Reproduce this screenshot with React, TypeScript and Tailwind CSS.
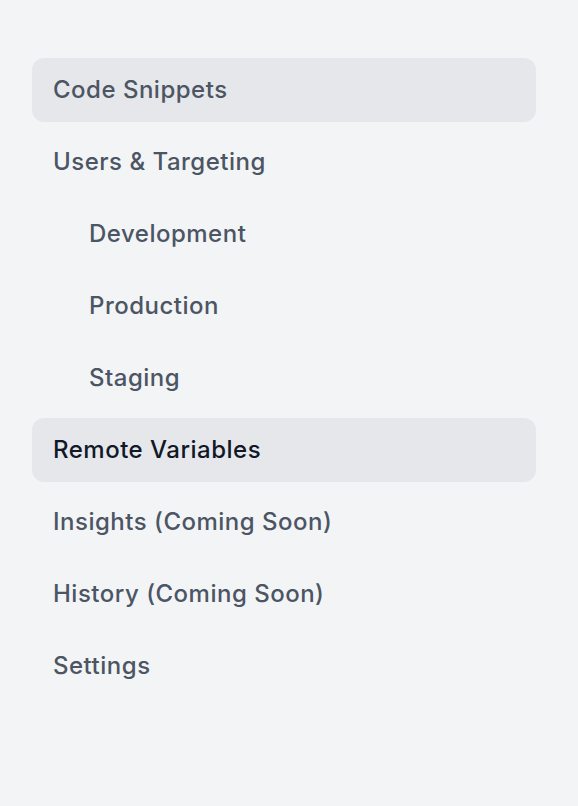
import React from 'react';

type NavItem = {
  label: string;
  sub?: boolean;
  active?: boolean;
  current?: boolean;
};

const items: NavItem[] = [
  { label: 'Code Snippets', active: true },
  { label: 'Users & Targeting' },
  { label: 'Development', sub: true },
  { label: 'Production', sub: true },
  { label: 'Staging', sub: true },
  { label: 'Remote Variables', active: true, current: true },
  { label: 'Insights (Coming Soon)' },
  { label: 'History (Coming Soon)' },
  { label: 'Settings' },
];

const App: React.FC = () => {
  return (
    <div
      className="min-h-screen bg-[#f3f4f6] pt-[58px] pl-[32px]"
      style={{ fontFamily: 'Inter, "Noto Sans", sans-serif' }}
    >
      <nav className="flex flex-col gap-[8px] w-[504px]">
        {items.map((item) => (
          <a
            key={item.label}
            href="#"
            className={`flex items-center h-[64px] rounded-xl text-[24px] font-medium tracking-[0.5px] ${
              item.sub ? 'pl-[57px]' : 'pl-[21px]'
            } ${item.active ? 'bg-[#e5e7eb]' : ''} ${
              item.current ? 'text-[#111827]' : 'text-[#4b5563]'
            }`}
          >
            {item.label}
          </a>
        ))}
      </nav>
    </div>
  );
};

export default App;
